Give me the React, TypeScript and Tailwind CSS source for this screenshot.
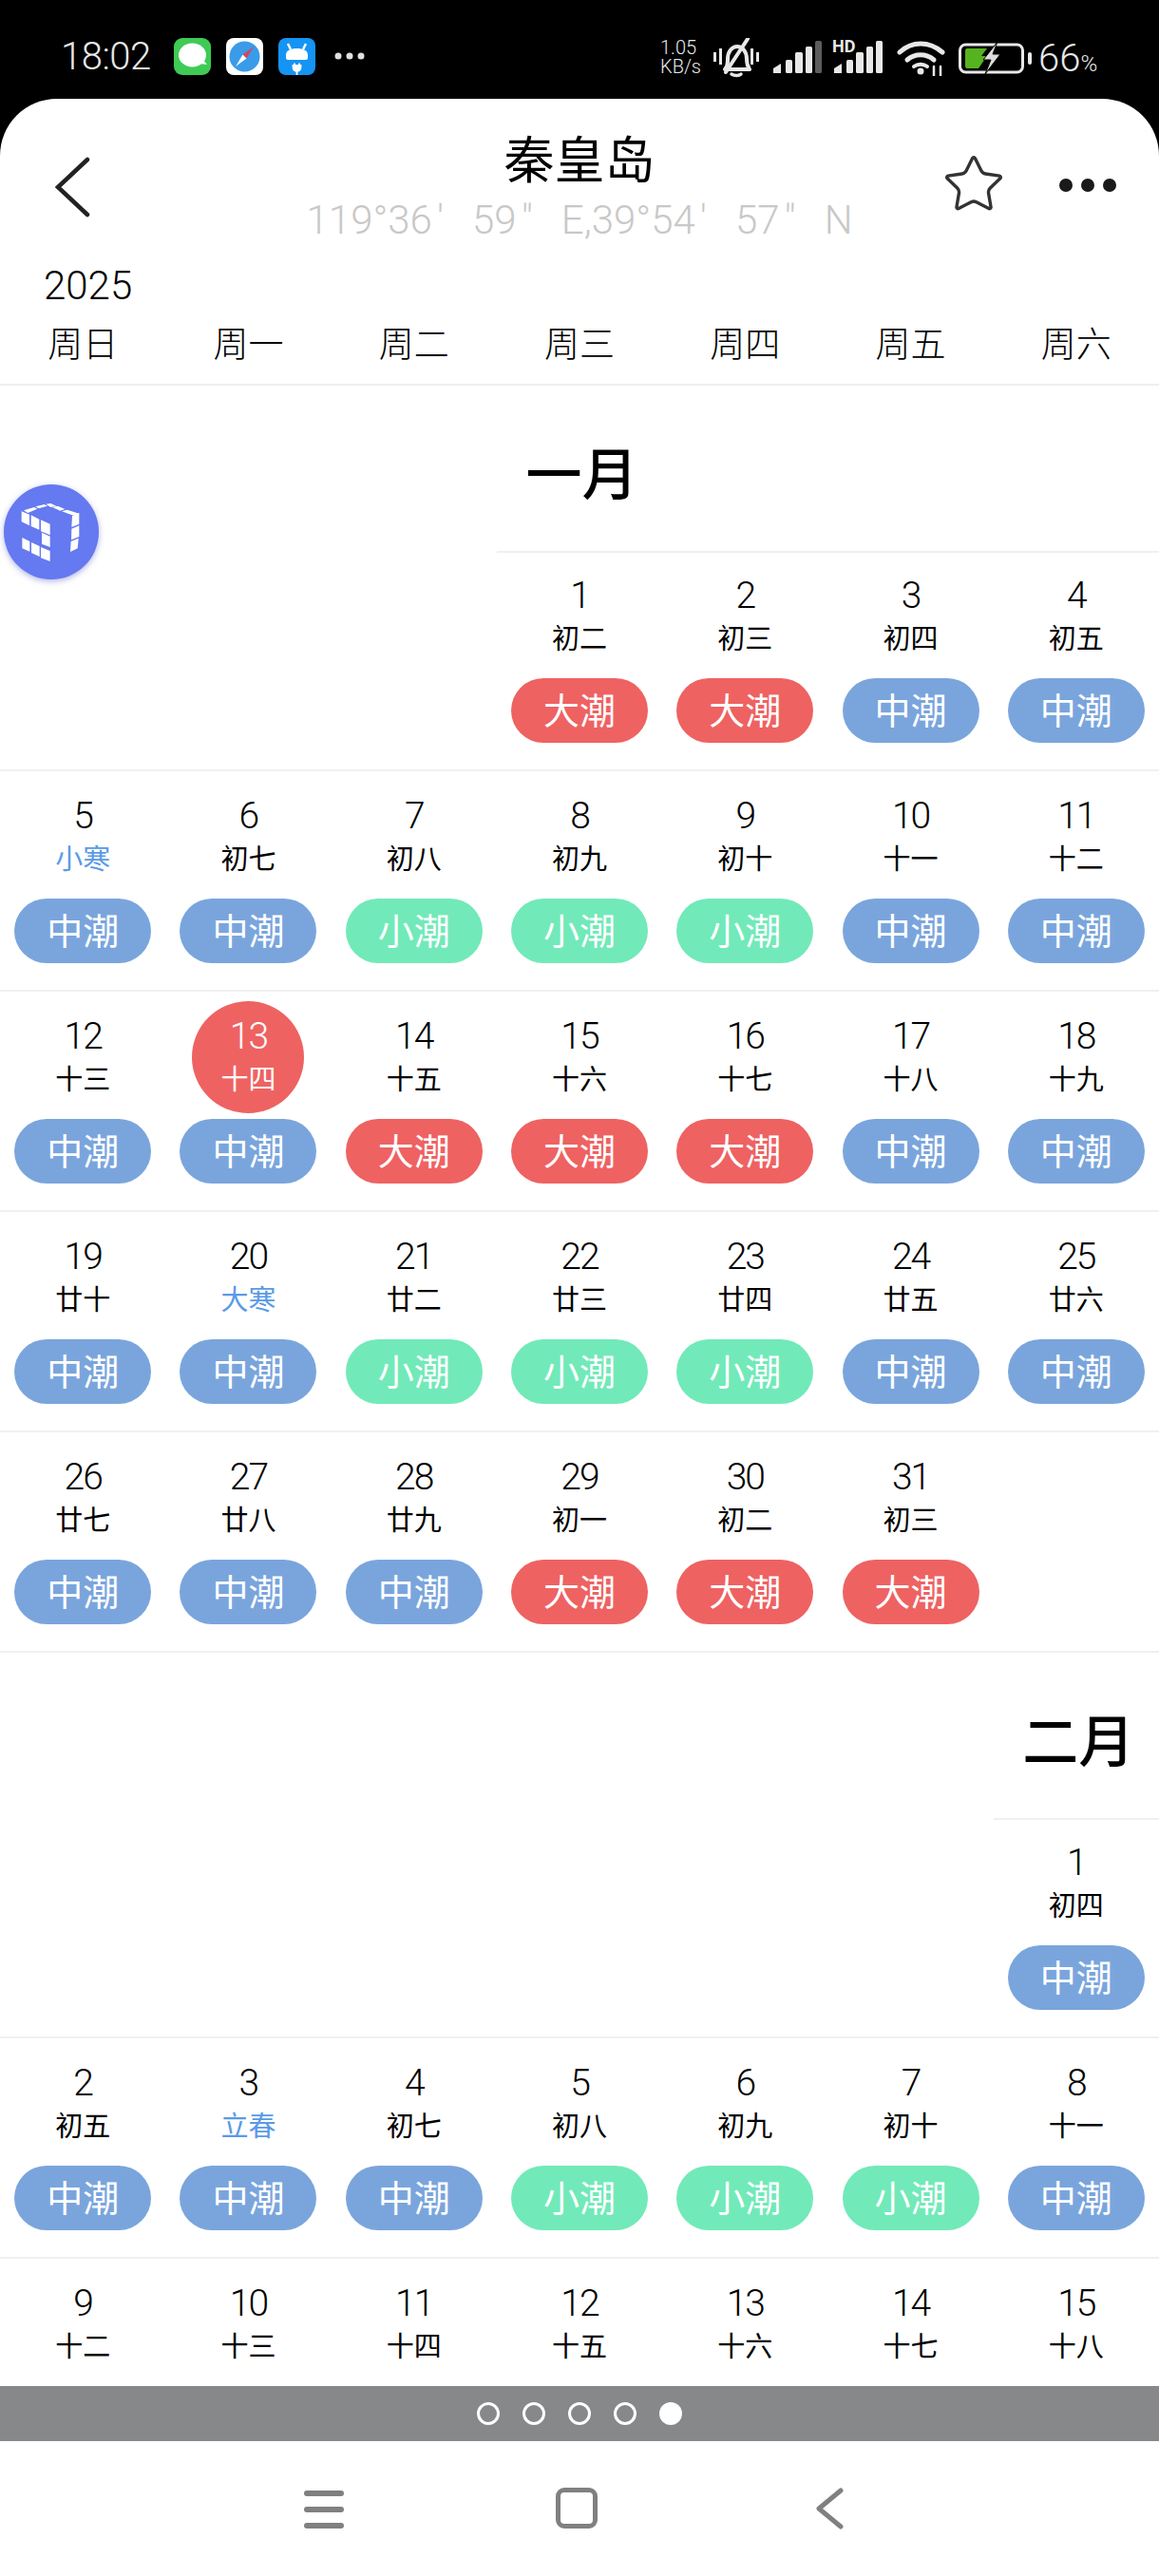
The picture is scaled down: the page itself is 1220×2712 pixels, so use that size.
import { Star } from "lucide-react";

type Tide = "大潮" | "中潮" | "小潮";
type Day = { n: number; lunar: string; term?: boolean; tide?: Tide; today?: boolean };

const tideColors: Record<Tide, string> = {
  大潮: "bg-[#ee6262]",
  中潮: "bg-[#7aa5dc]",
  小潮: "bg-[#72e9b9]",
};

const janLunar = "初二 初三 初四 初五 小寒 初七 初八 初九 初十 十一 十二 十三 十四 十五 十六 十七 十八 十九 廿十 大寒 廿二 廿三 廿四 廿五 廿六 廿七 廿八 廿九 初一 初二 初三".split(" ");
const janTide = "大大中中中中小小小中中中中大大大中中中中小小小中中中中中大大大".split("");
const febLunar = "初四 初五 立春 初七 初八 初九 初十 十一 十二 十三 十四 十五 十六 十七 十八".split(" ");
const febTide = "中中中中小小小中".split("");
const terms = ["小寒", "大寒", "立春"];

function buildDays(lunar: string[], tides: string[]): Day[] {
  return lunar.map((l, i) => ({
    n: i + 1,
    lunar: l,
    term: terms.includes(l),
    tide: tides[i] ? ((tides[i] + "潮") as Tide) : undefined,
  }));
}

function buildWeeks(days: Day[], offset: number) {
  const cells: (Day | null)[] = [...Array(offset).fill(null), ...days];
  const weeks: (Day | null)[][] = [];
  for (let i = 0; i < cells.length; i += 7) {
    const week = cells.slice(i, i + 7);
    while (week.length < 7) week.push(null);
    weeks.push(week);
  }
  return weeks;
}

const janDays = buildDays(janLunar, janTide);
janDays[12].today = true;
const febDays = buildDays(febLunar, febTide);

function DayCell({ day, first }: { day: Day | null; first: boolean }) {
  if (!day) return <div />;
  return (
    <div className={`flex flex-col items-center ${first ? "border-t-2 border-[#f0f0f0] pt-[8px]" : "pt-[10px]"}`}>
      <div
        className={`flex h-[118px] w-[118px] flex-col items-center pt-[15px] ${
          day.today ? "rounded-full bg-[#ee6262] text-white" : "text-black"
        }`}
      >
        <span className="text-[39px] leading-[44px] font-light tracking-[-2px]">{day.n}</span>
        <span className={`mt-[6px] text-[29px] leading-[36px] ${day.term ? "text-[#5a9ae6]" : ""}`}>
          {day.lunar}
        </span>
      </div>
      {day.tide && (
        <div
          className={`mt-[6px] flex h-[68px] w-[144px] items-center justify-center rounded-full pt-[2px] text-[38px] text-white ${tideColors[day.tide]}`}
        >
          {day.tide}
        </div>
      )}
    </div>
  );
}

function Month({ title, titleCol, days, offset }: { title: string; titleCol: string; days: Day[]; offset: number }) {
  const weeks = buildWeeks(days, offset);
  return (
    <section>
      <div className="grid h-[174px] grid-cols-7 items-center pt-[14px]">
        <h2 className={`pl-[5px] text-center text-[59px] leading-none font-medium whitespace-nowrap text-black ${titleCol}`}>
          {title}
        </h2>
      </div>
      {weeks.map((week, w) => (
        <div key={w} className="grid h-[232px] grid-cols-7 border-b-2 border-[#f0f0f0]">
          {week.map((day, i) => (
            <DayCell key={i} day={day} first={w === 0} />
          ))}
        </div>
      ))}
    </section>
  );
}

function SignalBars({ dim }: { dim?: boolean }) {
  return (
    <svg width="52" height="34" viewBox="0 0 52 34" fill="#e8e8e8">
      <path d="M0 34v-5l8-5v10z" />
      <rect x="13" y="20" width="7" height="14" rx="1.500" />
      <rect x="23" y="12" width="8" height="22" rx="1.500" />
      <rect x="34" y="6" width="7" height="28" rx="1.500" />
      <rect x="44" y="0" width="7" height="34" rx="1.500" fill={dim ? "#5c5c5c" : "#e8e8e8"} />
    </svg>
  );
}

function StatusBar() {
  return (
    <div className="flex h-[104px] shrink-0 items-start bg-black pt-[40px] pl-[64px] text-[#e8e8e8]">
      <span className="w-[119px] text-[40px] leading-[40px] font-light tracking-[-0.5px]">18:02</span>
      <svg width="39" height="39" viewBox="0 0 39 39">
        <rect width="39" height="39" rx="9" fill="#3ecb55" />
        <ellipse cx="19.500" cy="18" rx="14.500" ry="12.500" fill="#fff" />
        <path d="M27 27l8 1-5-6z" fill="#fff" />
      </svg>
      <svg className="ml-[16px]" width="39" height="39" viewBox="0 0 39 39">
        <rect width="39" height="39" rx="8" fill="#fff" />
        <circle cx="19.500" cy="19.500" r="16" fill="#3a9be8" />
        <path d="M29 9L17.500 17.500 21.500 21.500z" fill="#d8445c" />
        <path d="M10 30l7.500-12.500 4 4z" fill="#fff" />
      </svg>
      <svg className="ml-[16px]" width="39" height="39" viewBox="0 0 39 39">
        <rect width="39" height="39" rx="8" fill="#1594f3" />
        <path d="M8 18c0-5 5-7 11.500-7S31 13 31 18v3a2 2 0 0 1-2 2H10a2 2 0 0 1-2-2z" fill="#fff" />
        <path d="M10 6l3 6M29 6l-3 6" stroke="#fff" strokeWidth="2.500" />
        <path d="M17 29v-2.500M22 29v-2.500M15.500 29h8v2a4 4 0 0 1-8 0zM19.500 33v6" stroke="#fff" strokeWidth="1.800" fill="#fff" />
      </svg>
      <svg className="mt-[15px] ml-[20px]" width="32" height="8" viewBox="0 0 32 8" fill="#e0e0e0">
        <circle cx="4" cy="4" r="3.500" />
        <circle cx="16" cy="4" r="3.500" />
        <circle cx="28" cy="4" r="3.500" />
      </svg>

      <div className="ml-[311px] flex w-[43px] flex-col text-[20px] leading-[20px] font-light">
        <span className="whitespace-nowrap">1.05</span>
        <span className="whitespace-nowrap">KB/s</span>
      </div>
      <svg className="ml-[13px]" width="48" height="42" viewBox="0 0 48 42" fill="none" stroke="#e8e8e8" strokeWidth="4">
        <path d="M1.500 15v10M7.500 11v17M46.500 15v10M40.500 11v17" strokeWidth="3" />
        <path d="M12 33c3-3 3-6 3-11 0-7 4-13 10-13s10 6 10 13c0 5 1 8 3 11z" strokeLinejoin="round" />
        <path d="M36 1L13 36" strokeWidth="4" strokeLinecap="round" />
        <path d="M19 38c3 2 8 2 10 0" strokeWidth="3.500" strokeLinecap="round" />
      </svg>
      <div className="mt-[3px] ml-[15px]">
        <SignalBars dim />
      </div>
      <div className="relative mt-[3px] ml-[12px]">
        <SignalBars />
        <span className="absolute -top-[1px] -left-[2px] text-[18px] leading-[14px] font-bold">HD</span>
      </div>
      <svg className="mt-[2px] ml-[14px]" width="51" height="38" viewBox="0 0 51 38" fill="none" stroke="#e8e8e8" strokeWidth="5" strokeLinecap="round">
        <path d="M3 13C16 1 34 1 48 13" />
        <path d="M11 21c8-7 20-7 28 0" />
        <path d="M18 28c4-3 10-3 14 0" strokeWidth="4" />
        <circle cx="25" cy="33" r="3.500" fill="#e8e8e8" stroke="none" />
        <path d="M39 28v10M46 28v10" strokeWidth="2.500" />
      </svg>
      <svg className="mt-[4px] ml-[14px]" width="78" height="34" viewBox="0 0 78 34" fill="none">
        <rect x="1.500" y="3" width="66" height="29" rx="6" stroke="#e8e8e8" strokeWidth="3" />
        <path d="M7 9a2 2 0 0 1 2-2h21l-6 8h6l-9 13H9a2 2 0 0 1-2-2z" fill="#56b320" />
        <path d="M41 0L26 19h8l-6 15 16-21h-8z" fill="#dcdcdc" stroke="#000" strokeWidth="1" />
        <rect x="73" y="11" width="4" height="13" rx="2" fill="#e8e8e8" />
      </svg>
      <span className="ml-[6px] text-[40px] leading-[44px] font-light">
        66<span className="text-[24px]">%</span>
      </span>
    </div>
  );
}

function Prime({ mark }: { mark: string }) {
  return <span className="mr-[30px] ml-[5px]">{mark}</span>;
}

function Header() {
  return (
    <header className="relative shrink-0">
      <div className="flex flex-col items-center pt-[37px]">
        <h1 className="text-[53px] leading-[58px] text-black">秦皇岛</h1>
        <p className="mt-[9px] text-[42px] leading-[48px] font-light whitespace-nowrap text-[#c8c8c8]">
          119°36<Prime mark="′" />59<Prime mark="″" />E,39°54<Prime mark="′" />57<Prime mark="″" />N
        </p>
      </div>
      <svg className="absolute top-[61px] left-[56px]" width="40" height="64" viewBox="0 0 40 64" fill="none" stroke="#222" strokeWidth="4.500">
        <path d="M36 3L5 32l31 29" strokeLinecap="round" />
      </svg>
      <Star className="absolute top-[56px] left-[991px]" size={68} strokeWidth={1.2} color="#333" />
      <div className="absolute top-[84px] left-[1115px] flex gap-[9px]">
        <span className="h-[14px] w-[14px] rounded-full bg-[#1a1a1a]" />
        <span className="h-[14px] w-[14px] rounded-full bg-[#1a1a1a]" />
        <span className="h-[14px] w-[14px] rounded-full bg-[#1a1a1a]" />
      </div>
      <div className="pt-[22px] pl-[46px] text-[42px] leading-[46px] font-light text-black">2025</div>
      <div className="grid grid-cols-7 border-b-2 border-[#eeeeee] pt-[18px] pb-[18px]">
        {["周日", "周一", "周二", "周三", "周四", "周五", "周六"].map((d) => (
          <div key={d} className="text-center text-[37px] leading-[44px] font-light text-black">
            {d}
          </div>
        ))}
      </div>
    </header>
  );
}

function FloatButton() {
  const tiles = [
    "68,145 93,155 93,190 68,178",
    "98,157 124,170 124,203 98,192",
    "129,172 158,185 158,220 129,208",
    "132,212 158,224 158,258 132,248",
    "70,228 94,240 94,272 70,262",
    "99,243 125,255 125,288 99,276",
    "129,258 158,270 158,303 129,292",
    "228,160 250,150 250,185 226,195",
    "226,200 250,190 250,225 225,235",
    "224,240 248,230 245,262 222,273",
    "75,142 108,132 118,137 88,150",
    "112,130 140,123 150,128 122,136",
    "145,122 160,120 178,128 160,132",
    "165,132 182,128 205,138 190,143",
    "195,145 212,140 250,152 232,158",
  ];
  return (
    <div className="absolute top-[510px] left-[4px] h-[100px] w-[100px] rounded-full bg-[#6579f0] shadow-[0_2px_6px_rgba(80,90,200,0.45)]">
      <svg width="100" height="100" viewBox="12 60 300 300" fill="#fff">
        {tiles.map((t) => (
          <polygon key={t} points={t} />
        ))}
      </svg>
    </div>
  );
}

function PagerBar() {
  return (
    <div className="flex h-[58px] shrink-0 items-center justify-center gap-[24px] bg-[#86888a]">
      {[0, 1, 2, 3].map((i) => (
        <span key={i} className="h-[24px] w-[24px] rounded-full border-[3px] border-white" />
      ))}
      <span className="h-[24px] w-[24px] rounded-full bg-white" />
    </div>
  );
}

function NavBar() {
  return (
    <div className="relative h-[142px] shrink-0 bg-white">
      <div className="absolute top-[52px] left-[320px] flex w-[42px] flex-col gap-[11px]">
        <span className="h-[6px] rounded-full bg-[#808080]" />
        <span className="h-[6px] rounded-full bg-[#808080]" />
        <span className="h-[6px] rounded-full bg-[#808080]" />
      </div>
      <div className="absolute top-[49px] left-[585px] h-[43px] w-[44px] rounded-[9px] border-[5px] border-[#808080]" />
      <svg className="absolute top-[49px] left-[858px]" width="30" height="44" viewBox="0 0 30 44" fill="none" stroke="#808080" strokeWidth="5" strokeLinecap="round" strokeLinejoin="round">
        <path d="M27 3L4 22l23 19" />
      </svg>
    </div>
  );
}

export default function App() {
  return (
    <div className="relative flex h-[2712px] w-[1220px] flex-col overflow-hidden bg-black font-['Roboto','Noto_Sans_CJK_SC',sans-serif]">
      <StatusBar />
      <div className="flex min-h-0 flex-1 flex-col overflow-hidden rounded-t-[60px] bg-white">
        <Header />
        <div className="min-h-0 flex-1 overflow-hidden">
          <Month title="一月" titleCol="col-start-4" days={janDays} offset={3} />
          <Month title="二月" titleCol="col-start-7" days={febDays} offset={6} />
        </div>
        <PagerBar />
        <NavBar />
      </div>
      <FloatButton />
    </div>
  );
}
